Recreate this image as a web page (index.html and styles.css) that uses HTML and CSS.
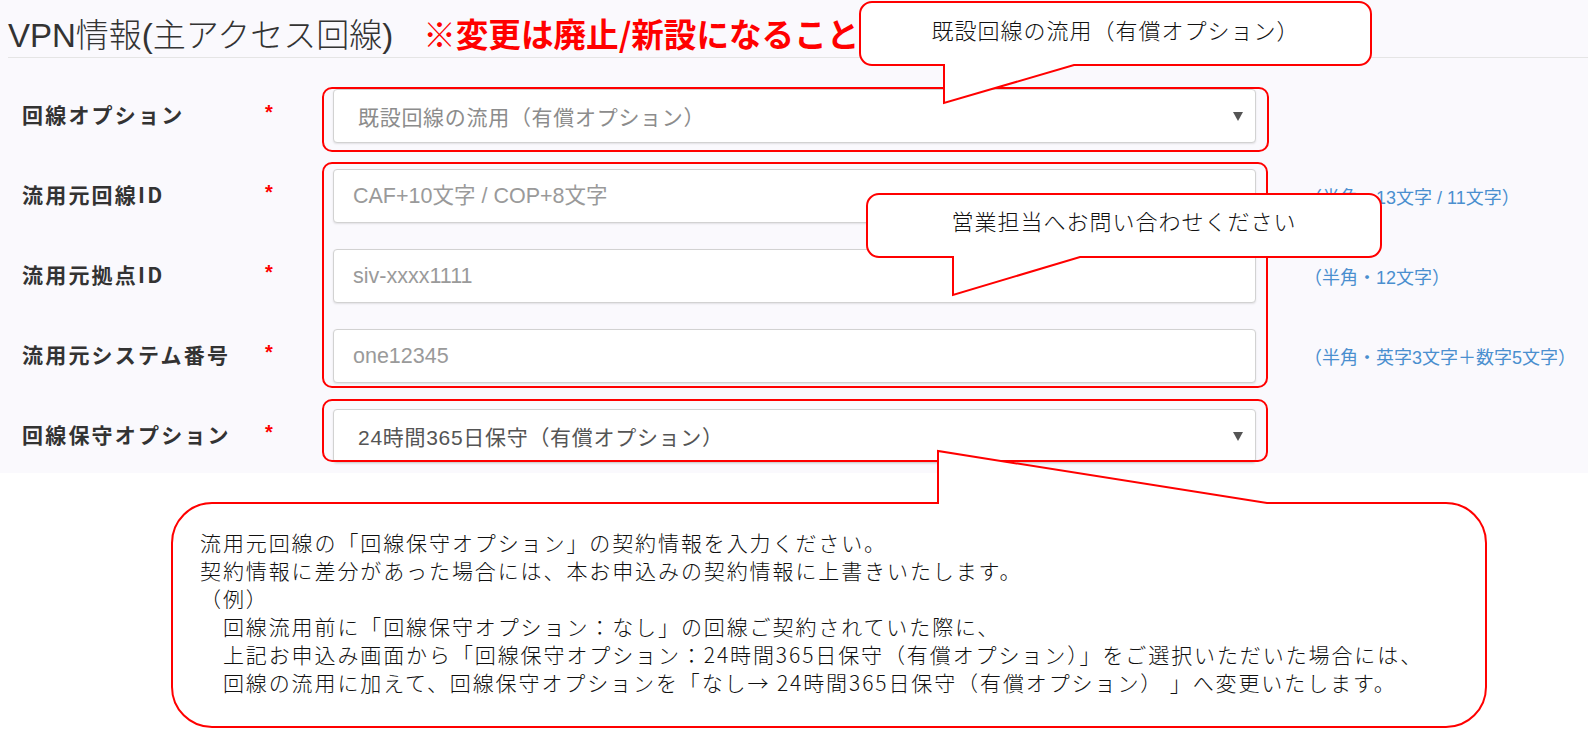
FILE: index.html
```html
<!DOCTYPE html>
<html lang="ja">
<head>
<meta charset="UTF-8">
<meta name="viewport" content="width=device-width, initial-scale=1.0">
<title>VPN情報</title>
<link rel="stylesheet" href="styles.css">
</head>
<body>
<div class="page">

<div class="panel">
<h2 class="title">VPN情報(主アクセス回線)<span class="warn">※変更は廃止/新設になること</span></h2>

<div class="form">
<div class="row">
<div class="label">回線オプション</div>
<div class="req">*</div>
<div class="select muted"><span>既設回線の流用（有償オプション）</span><i class="caret"></i></div>
<div class="hint"></div>
</div>
<div class="row">
<div class="label">流用元回線ID</div>
<div class="req">*</div>
<input class="input" type="text" placeholder="CAF+10文字 / COP+8文字">
<div class="hint">（半角・13文字 / 11文字）</div>
</div>
<div class="row">
<div class="label">流用元拠点ID</div>
<div class="req">*</div>
<input class="input" type="text" placeholder="siv-xxxx1111">
<div class="hint">（半角・12文字）</div>
</div>
<div class="row">
<div class="label">流用元システム番号</div>
<div class="req">*</div>
<input class="input" type="text" placeholder="one12345">
<div class="hint">（半角・英字3文字＋数字5文字）</div>
</div>
<div class="row">
<div class="label">回線保守オプション</div>
<div class="req">*</div>
<div class="select"><span>24時間365日保守（有償オプション）</span><i class="caret"></i></div>
<div class="hint"></div>
</div>
</div>
</div>

<!-- red marks over the form -->
<div class="mark mark-1"></div>
<div class="mark mark-2"></div>
<div class="mark mark-3"></div>

<!-- speech bubbles -->
<svg class="bubbles" width="1588" height="729" viewBox="0 0 1588 729">
<path d="M872 2 H1359 A12 12 0 0 1 1371 14 V53 A12 12 0 0 1 1359 65 H1074 L944 103 V65 H872 A12 12 0 0 1 860 53 V14 A12 12 0 0 1 872 2 Z"/>
<path d="M879 194 H1369 A12 12 0 0 1 1381 206 V245 A12 12 0 0 1 1369 257 H1080 L953 295 V257 H879 A12 12 0 0 1 867 245 V206 A12 12 0 0 1 879 194 Z"/>
<path d="M212 503 H938 V451 L1267 503 H1446 A40 40 0 0 1 1486 543 V687 A40 40 0 0 1 1446 727 H212 A40 40 0 0 1 172 687 V543 A40 40 0 0 1 212 503 Z"/>
</svg>

<div class="tip tip-1">既設回線の流用（有償オプション）</div>
<div class="tip tip-2">営業担当へお問い合わせください</div>

<div class="note">
<div>流用元回線の「回線保守オプション」の契約情報を入力ください。</div>
<div>契約情報に差分があった場合には、本お申込みの契約情報に上書きいたします。</div>
<div>（例）</div>
<div>　回線流用前に「回線保守オプション：なし」の回線ご契約されていた際に、</div>
<div>　上記お申込み画面から「回線保守オプション：24時間365日保守（有償オプション）」をご選択いただいた場合には、</div>
<div>　回線の流用に加えて、回線保守オプションを「なし→ 24時間365日保守（有償オプション） 」へ変更いたします。</div>
</div>

</div>
</body>
</html>
```

FILE: styles.css
```css
body {
margin: 0;
background: #fff;
font-family: "Liberation Sans", "Noto Sans CJK JP", sans-serif;
color: #333;
}

.page {
position: relative;
width: 1588px;
height: 729px;
overflow: hidden;
}

/* Form panel */
.panel {
background: #faf9fd;
height: 473px;
}

.title {
margin: 0 0 0 8px;
padding-top: 9px;
height: 48px;
line-height: 48px;
border-bottom: 1px solid #e5e5e5;
font-size: 33px;
font-weight: 300;
white-space: nowrap;
}

.warn {
margin-left: 30px;
color: #f00;
font-family: "Noto Sans CJK JP", sans-serif;
font-size: 32.6px;
font-weight: 700;
}

.form {
display: flex;
flex-direction: column;
gap: 26px;
padding: 31px 0 0 22px;
}

.row {
display: grid;
grid-template-columns: 243px 68px 923px auto;
align-items: center;
height: 54px;
}

.label {
margin-top: -4px;
font-family: "Noto Sans CJK JP", sans-serif;
font-size: 21px;
font-weight: 700;
letter-spacing: 2.2px;
color: #333;
}

.req {
margin-top: -8px;
color: #f00;
font-size: 20px;
font-weight: 700;
}

.select,
.input {
box-sizing: border-box;
width: 100%;
height: 54px;
border: 1px solid #d2d2d2;
border-radius: 4px;
background: #fff;
box-shadow: 0 1px 2px rgba(0, 0, 0, 0.1);
font-size: 21.5px;
}

.input {
padding: 0 19px;
font-family: inherit;
color: #555;
outline: none;
}

.input::placeholder {
color: #9a9a9a;
}

.select {
display: flex;
align-items: center;
justify-content: space-between;
padding: 0 12px 0 24px;
font-size: 21px;
letter-spacing: 0.7px;
color: #555;
}

.select.muted {
color: #8c8c8c;
}

.caret {
width: 0;
height: 0;
border-left: 5px solid transparent;
border-right: 5px solid transparent;
border-top: 9px solid #555;
}

.hint {
padding-left: 48px;
color: #4a8fcf;
font-size: 18px;
white-space: nowrap;
}

/* Red annotation frames */
.mark {
position: absolute;
box-sizing: border-box;
border: 2px solid #f00;
border-radius: 10px;
}

.mark-1 { left: 322px; top: 87px; width: 947px; height: 65px; }
.mark-2 { left: 322px; top: 162px; width: 946px; height: 226px; }
.mark-3 { left: 322px; top: 399px; width: 946px; height: 63px; }

/* Speech bubbles */
.bubbles {
position: absolute;
left: 0;
top: 0;
pointer-events: none;
}

.bubbles path {
fill: #fff;
stroke: #f00;
stroke-width: 2;
stroke-linejoin: miter;
}

.tip {
position: absolute;
display: flex;
align-items: center;
justify-content: center;
font-family: "Noto Sans CJK JP", sans-serif;
font-size: 22px;
font-weight: 300;
letter-spacing: 1px;
color: #111;
}

.tip-1 { left: 860px; top: -3px; width: 511px; height: 63px; }
.tip-2 { left: 867px; top: 188px; width: 514px; height: 63px; }

.note {
position: absolute;
left: 200px;
top: 500px;
height: 224px;
display: flex;
flex-direction: column;
justify-content: center;
font-family: "Noto Sans CJK JP", sans-serif;
font-size: 21px;
font-weight: 300;
letter-spacing: 1.9px;
line-height: 28px;
color: #111;
white-space: pre;
}
```
